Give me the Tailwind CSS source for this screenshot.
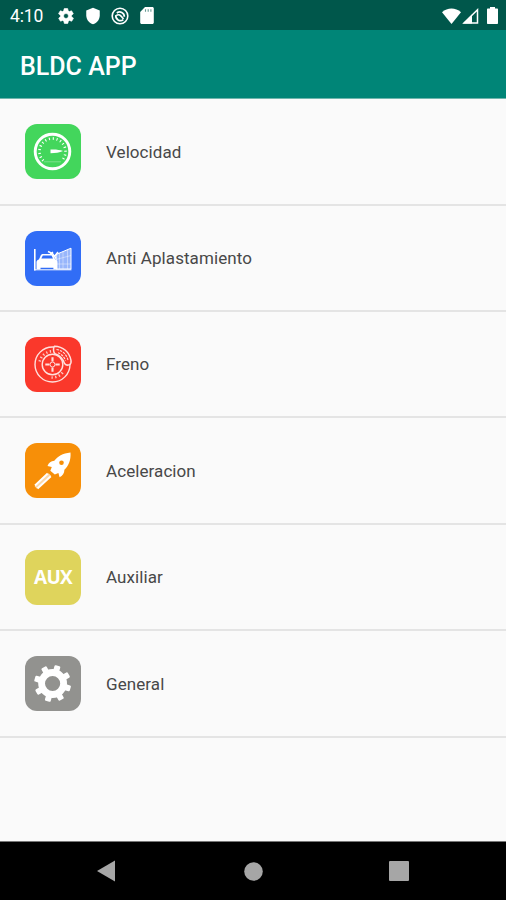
<!DOCTYPE html>
<html lang="es">
<head>
    <meta charset="UTF-8">
    <meta name="viewport" content="width=device-width, initial-scale=1.0">
    <title>BLDC APP</title>
    <script src="https://cdn.jsdelivr.net/npm/@tailwindcss/browser@4"></script>
</head>
<body class="bg-[#fafafa] font-['Roboto',sans-serif]">
    <div class="flex flex-col h-[900px] w-[506px] overflow-hidden">
        <!-- Barra de estado -->
        <div class="h-[30px] shrink-0 bg-[#00574b] text-white flex items-center justify-between pl-[10px] pr-[8px] pt-px">
            <div class="flex items-center">
                <span class="w-[47px] text-[17.5px] leading-none tracking-[-0.1px] pt-[2px]">4:10</span>
                <svg class="w-[18px] h-[18px]" viewBox="0 0 24 24" fill="currentColor"><path d="M19.4 13c.04-.3.06-.6.06-1s-.02-.7-.06-1l2.1-1.6c.2-.2.3-.4.1-.7l-2-3.4c-.1-.2-.4-.3-.6-.2l-2.5 1a7 7 0 0 0-1.7-1l-.4-2.6c0-.3-.2-.5-.5-.5h-4c-.2 0-.4.2-.5.4l-.4 2.7a7 7 0 0 0-1.7 1l-2.4-1c-.3-.1-.5 0-.7.2l-2 3.4c-.1.2 0 .5.2.7L4.600 11a8 8 0 0 0 0 2l-2.1 1.6c-.2.2-.3.5-.1.7l2 3.4c.1.2.4.3.6.2l2.5-1a7 7 0 0 0 1.7 1l.4 2.6c0 .3.2.5.5.5h4c.2 0 .4-.2.5-.4l.4-2.7a7 7 0 0 0 1.7-1l2.4 1c.3.1.5 0 .7-.2l2-3.4c.1-.2 0-.5-.1-.7zM12 15.300a3.300 3.300 0 1 1 0-6.600 3.300 3.300 0 0 1 0 6.600z" stroke="currentColor" stroke-width=".8"/></svg>
                <svg class="w-[18px] h-[18px] ml-[9px]" viewBox="0 0 24 24" fill="currentColor"><path d="M12 1 3 4.500V11c0 5.500 3.800 10.700 9 12 5.200-1.300 9-6.500 9-12V4.500z"/></svg>
                <svg class="w-[18px] h-[18px] ml-[9px]" viewBox="0 0 18 18" fill="none" stroke="currentColor"><circle cx="9" cy="9" r="7.800" stroke-width="1.600"/><path d="M12.300 12.600A4.600 4.600 0 0 1 4.900 8.200M5.800 6a4.600 4.600 0 0 1 7.500 3.800M5.500 8.300c2.300-1.300 3.800-.6 7 3.700" stroke-width="1.700"/></svg>
                <svg class="w-[14px] h-[17px] ml-[11px]" viewBox="0 0 14 17"><path d="M5 0h7.300c.9 0 1.500.6 1.500 1.500v14c0 .9-.6 1.500-1.500 1.500H1.700C.8 17 .2 16.400.2 15.500V5z" fill="#fff"/><path d="M5.500 2.300v2.500M8.200 2.300v2.500M10.900 2.300v2.500" stroke="#00574b" stroke-width="1.100" opacity=".6"/></svg>
            </div>
            <div class="flex items-center">
                <svg class="w-[19px] h-[16px]" viewBox="0 0 19 16" fill="currentColor"><path d="M9.500 16 0 4.200C5.500-.8 13.500-.8 19 4.200z"/></svg>
                <svg class="w-[17px] h-[16px] ml-px" viewBox="0 0 17 16" fill="none" stroke="currentColor"><path d="M2 15 15.500 1.800V15z" stroke-width="1.500"/><path d="M1 15.500 10 6.500v9z" fill="currentColor" stroke="none"/></svg>
                <svg class="w-[11px] h-[17px] ml-[8px]" viewBox="0 0 11 17" fill="currentColor"><path d="M3 0h5v1.500h2c.6 0 1 .4 1 1V16c0 .6-.4 1-1 1H1c-.6 0-1-.4-1-1V2.500c0-.6.4-1 1-1h2z"/></svg>
            </div>
        </div>

        <!-- Cabecera -->
        <header class="h-[69px] shrink-0 bg-[#008577] border-b border-[#6fb5ad] flex items-center pl-[20px] pt-[4px]">
            <h1 class="text-white text-[25px] font-medium leading-none">BLDC APP</h1>
        </header>

        <!-- Lista de opciones -->
        <main class="flex-1 text-[17px] text-[#484848] tracking-[0.08px]">
            <div class="h-[107px] border-b-2 border-[#e4e4e4] flex items-center pl-[25px] gap-[25px]">
                <div class="w-[56px] h-[55px] rounded-[12px] bg-[#43d65c]">
                    <svg class="w-full h-full" viewBox="0 0 56 55" fill="none" stroke="#fff">
                        <circle cx="27.500" cy="27.500" r="17.300" stroke-width="2.900"/>
                        <path d="M18.300 36.700a13 13 0 1 1 18.400 0" stroke-width="2.600" stroke-dasharray="1.100 2.730"/>
                        <path d="M19 37.800h17" stroke-width=".6" opacity=".5"/>
                        <path d="M25.500 25.600c5-.3 9 .2 12.500 1.400-3.500 1.400-7.500 2.200-12.500 2.300z" fill="#fff" stroke="none"/>
                    </svg>
                </div>
                <span class="pt-[2px]">Velocidad</span>
            </div>
            <div class="h-[106px] border-b-2 border-[#e4e4e4] flex items-center pl-[25px] gap-[25px]">
                <div class="w-[56px] h-[55px] rounded-[12px] bg-[#316df6]">
                    <svg class="w-full h-full" viewBox="0 0 56 55" fill="none" stroke="#fff">
                        <path d="M9.800 18v21.500" stroke-width="1.600"/>
                        <path d="M9 38.800h37.500" stroke-width="1"/>
                        <path d="M11.500 31c0-1.400 1-2.300 2.400-2.600l1.800-3.900c.4-1 1.200-1.500 2.300-1.500h8.200c1.100 0 1.900.5 2.300 1.500l1.700 3.900c1.400.3 2.200 1.200 2.200 2.600v7.300h-4v-1.500H15.500v1.500h-4z" fill="#fff" stroke="none"/>
                        <path d="m16.300 27.600 1.500-3h8.700l1.500 3z" fill="#316df6" stroke="none"/>
                        <path d="m23 20.500 4.500 2 3.500 5M25 23.500l3-2.500M29 26l4-5" stroke-width="1.500"/>
                        <path d="M31 38V23.500l15-6.300V38z" stroke-width="1" fill="#fff" fill-opacity=".5"/>
                        <path d="M34.500 22v16M38 20.500V38M42.500 18.500V38M31 28.500l15-4M31 33h15" stroke-width=".8" opacity=".5"/>
                    </svg>
                </div>
                <span class="pt-[2px]">Anti Aplastamiento</span>
            </div>
            <div class="h-[106px] border-b-2 border-[#e4e4e4] flex items-center pl-[25px] gap-[25px]">
                <div class="w-[56px] h-[55px] rounded-[12px] bg-[#fa382b]">
                    <svg class="w-full h-full" viewBox="0 0 56 55" fill="none" stroke="#ffe0dd">
                        <circle cx="27.500" cy="27.500" r="17.500" stroke-width="1.400"/>
                        <path d="M14.700 24.500a13.200 13.200 0 0 1 12.500-10.200M26.500 40.500a13.200 13.200 0 0 0 12-6.200" stroke-width="2.600" stroke-dasharray="1.300 2.400" opacity=".85"/>
                        <circle cx="27.500" cy="27.500" r="10.300" stroke-width="1.400"/>
                        <circle cx="27.500" cy="27.500" r="2.500" stroke-width="1"/>
                        <path d="M27.500 20.300v4.200M27.500 30.500v4.200M20.300 27.500h4.200M30.500 27.500h4.200" stroke-width="2.100"/>
                        <path d="M29.500 9.200c8.500.2 15 6 16.500 14.200.3 1.700-.2 3.500-1.500 4.200-2 .8-4.200.4-5-1.200-1.500-4.300-4.700-8-9.500-9.700-1.800-1.300-2-6-.5-7.500z" fill="#fa382b" stroke-width="1.500"/>
                        <path d="M31.500 12.500c5.800.8 10 4.800 11.500 10.500M33 15.800c3.500 1.200 6 4 7.500 7.700" stroke-width="1.100" stroke-dasharray="2.500 1"/>
                    </svg>
                </div>
                <span class="pt-[2px]">Freno</span>
            </div>
            <div class="h-[107px] border-b-2 border-[#e4e4e4] flex items-center pl-[25px] gap-[25px]">
                <div class="w-[56px] h-[55px] rounded-[12px] bg-[#f78f08]">
                    <svg class="w-full h-full" viewBox="0 0 56 55" fill="#fff">
                        <path d="M45.500 9.500c-8 .9-12.800 3.800-16.200 8.300-3.300.3-5.600 2.100-6.800 5.200l4.300 1.100-1.500 3.600 4.500 3.900 3.600-1.500 1.200 4.200c3-1.600 4.800-4.100 4.800-7.500 4.200-4.200 6.700-9.600 6.100-17.300z"/>
                        <circle cx="36.500" cy="19.700" r="2.300" fill="#f78f08"/>
                        <path d="M22.700 30.500 10 42.500M25.800 33.200 12.500 45.500" fill="none" stroke="#fff" stroke-width="1.900"/>
                        <path d="M24.800 31.500 10.800 44.500" fill="none" stroke="#fff" stroke-width="3.500" opacity=".65"/>
                    </svg>
                </div>
                <span class="pt-[2px]">Aceleracion</span>
            </div>
            <div class="h-[106px] border-b-2 border-[#e4e4e4] flex items-center pl-[25px] gap-[25px]">
                <div class="w-[56px] h-[55px] rounded-[12px] bg-[#dfd45c] text-white flex items-center justify-center font-['Open_Sans',sans-serif] font-bold text-[19px] leading-none tracking-[-0.7px]">AUX</div>
                <span class="pt-[2px]">Auxiliar</span>
            </div>
            <div class="h-[107px] border-b-2 border-[#e4e4e4] flex items-center pl-[25px] gap-[25px]">
                <div class="w-[56px] h-[55px] rounded-[12px] bg-[#92928f]">
                    <svg class="w-full h-full" viewBox="0 0 56 55">
                        <circle cx="27.600" cy="27.500" r="11" fill="none" stroke="#fff" stroke-width="6.800"/>
                        <!-- Dientes -->
                        <g id="dientes" fill="#fff"></g>
                    </svg>
                </div>
                <span class="pt-[2px]">General</span>
            </div>
        </main>

        <!-- Barra de navegación -->
        <nav class="h-[59px] shrink-0 bg-black border-t border-[#777777] grid grid-cols-[97px_147px_145px_1fr] items-center">
            <span></span>
            <svg class="w-[18px] h-[22px]" viewBox="0 0 18 22" fill="#a6a6a6"><path d="M0 11 18 .5v21z"/></svg>
            <svg class="w-[19px] h-[19px]" viewBox="0 0 19 19" fill="#a6a6a6"><circle cx="9.500" cy="9.500" r="9.300"/></svg>
            <div class="w-[20px] h-[20px] rounded-[1px] bg-[#a6a6a6]"></div>
        </nav>
    </div>

    <script>
        // Dibuja los dientes del engranaje
        const dientes = document.getElementById('dientes');
        let d = '';
        for (let i = 0; i < 8; i++) {
            d += `<rect x="24.600" y="9" width="6" height="7" rx="1.200" transform="rotate(${16 + i * 45} 27.600 27.500)"/>`;
        }
        dientes.innerHTML = d;
    </script>
</body>
</html>
